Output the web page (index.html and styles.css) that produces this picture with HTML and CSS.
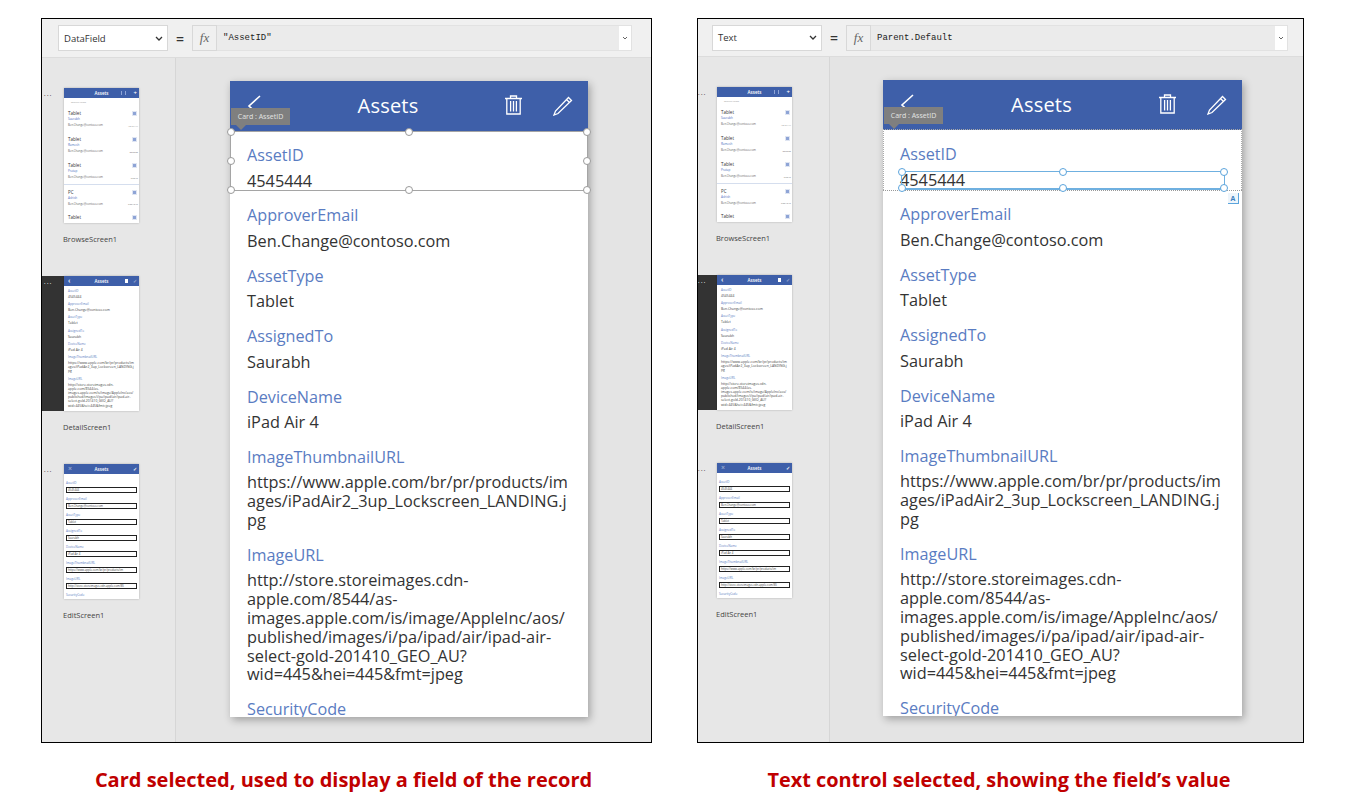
FILE: index.html
```html
<!DOCTYPE html>
<html lang="en">
<head>
    <meta charset="UTF-8">
    <meta name="viewport" content="width=device-width, initial-scale=1.0">
    <title>Card and text control selected</title>
    <link rel="stylesheet" href="styles.css">
</head>
<body>
    <div class="page">

        <!-- Painel esquerdo: card selecionado -->
        <section class="figure figure-left">
            <div class="studio">
                <div class="formula-bar">
                    <div class="prop-select"><span>DataField</span>
                        <svg class="caret" width="8" height="5" viewBox="0 0 8 5"><path d="M1 1l3 3 3-3" fill="none" stroke="#333" stroke-width="1.3"/></svg>
                    </div>
                    <div class="equals">=</div>
                    <div class="fx">fx</div>
                    <div class="formula-input"><span>"AssetID"</span>
                        <div class="expand"><svg width="6" height="4" viewBox="0 0 6 4"><path d="M1 1l2 2 2-2" fill="none" stroke="#666" stroke-width="1"/></svg></div>
                    </div>
                </div>
                <div class="workspace">
                    <aside class="sidebar">
                        <div class="screen-item">
                            <div class="screen-row"><div class="dots">•••</div>
                                <div class="thumb">
                                    <div class="thumb-head"><span>Assets</span><i class="thumb-sort"></i><i class="thumb-plus">+</i></div>
                                    <div class="thumb-search">Search items</div>
                                    <div class="thumb-card"><b>Tablet</b><em>Saurabh</em><span>Ben.Change@contoso.com</span><small>4545444</small><u></u></div>
                                    <div class="thumb-card"><b>Tablet</b><em>Ramesh</em><span>Ben.Change@contoso.com</span><small>323232</small><u></u></div>
                                    <div class="thumb-card"><b>Tablet</b><em>Pratap</em><span>Ben.Change@contoso.com</span><small>52345</small><u></u></div>
                                    <div class="thumb-card thumb-card-line"><b>PC</b><em>Ashish</em><span>Ben.Change@contoso.com</span><small>5234345</small><u></u></div>
                                    <div class="thumb-card"><b>Tablet</b><u></u></div>
                                </div>
                            </div>
                            <div class="screen-name">BrowseScreen1</div>
                        </div>
                        <div class="screen-item">
                            <div class="screen-row screen-row-active"><div class="dots">•••</div>
                                <div class="thumb">
                                    <div class="thumb-head"><i class="thumb-back">‹</i><span>Assets</span><i class="thumb-box"></i><i class="thumb-check thumb-dim">✓</i></div>
                                    <div class="thumb-detail">
                                        <em>AssetID</em><p>4545444</p>
                                        <em>ApproverEmail</em><p>Ben.Change@contoso.com</p>
                                        <em>AssetType</em><p>Tablet</p>
                                        <em>AssignedTo</em><p>Saurabh</p>
                                        <em>DeviceName</em><p>iPad Air 4</p>
                                        <em>ImageThumbnailURL</em><p>https://www.apple.com/br/pr/products/im<br>ages/iPadAir2_3up_Lockscreen_LANDING.j<br>pg</p>
                                        <em>ImageURL</em><p>http://store.storeimages.cdn-<br>apple.com/8544/as-<br>images.apple.com/is/image/AppleInc/aos/<br>published/images/i/pa/ipad/air/ipad-air-<br>select-gold-201410_GEO_AU?<br>wid=445&amp;hei=445&amp;fmt=jpeg</p>
                                    </div>
                                </div>
                            </div>
                            <div class="screen-name">DetailScreen1</div>
                        </div>
                        <div class="screen-item">
                            <div class="screen-row"><div class="dots">•••</div>
                                <div class="thumb">
                                    <div class="thumb-head"><i class="thumb-back thumb-dim">×</i><span>Assets</span><i class="thumb-check">✓</i></div>
                                    <div class="thumb-edit">
                                        <em>AssetID</em><p>4545444</p>
                                        <em>ApproverEmail</em><p>Ben.Change@contoso.com</p>
                                        <em>AssetType</em><p>Tablet</p>
                                        <em>AssignedTo</em><p>Saurabh</p>
                                        <em>DeviceName</em><p>iPad Air 4</p>
                                        <em>ImageThumbnailURL</em><p>https://www.apple.com/br/pr/products/im</p>
                                        <em>ImageURL</em><p>http://store.storeimages.cdn-apple.com/85</p>
                                        <em>SecurityCode</em><p></p>
                                    </div>
                                </div>
                            </div>
                            <div class="screen-name">EditScreen1</div>
                        </div>
                    </aside>
                    <main class="canvas">
                        <div class="phone">
                            <header class="phone-head">
                                <svg class="back-icon" width="16" height="24" viewBox="0 0 16 24"><path d="M14 2L3 12l11 10" fill="none" stroke="#fff" stroke-width="1.6"/></svg>
                                <h2>Assets</h2>
                                <svg class="trash-icon" width="19" height="20" viewBox="0 0 19 20"><path d="M1 3.5h17M6.5 3V1h6v2M2.8 3.5V19h13.4V3.5M6.6 6v10.5M9.5 6v10.5M12.4 6v10.5" fill="none" stroke="#fff" stroke-width="1.3"/></svg>
                                <svg class="pencil-icon" width="20" height="20" viewBox="0 0 20 20"><path d="M15.5 1.5l3 3L5 17.5l-4 1.5 1.5-4zM13.5 3.5l3 3" fill="none" stroke="#fff" stroke-width="1.3"/></svg>
                            </header>
                            <div class="phone-body">
                                <div class="field"><label>AssetID</label><p>4545444</p></div>
                                <div class="field"><label>ApproverEmail</label><p>Ben.Change@contoso.com</p></div>
                                <div class="field"><label>AssetType</label><p>Tablet</p></div>
                                <div class="field"><label>AssignedTo</label><p>Saurabh</p></div>
                                <div class="field"><label>DeviceName</label><p>iPad Air 4</p></div>
                                <div class="field"><label>ImageThumbnailURL</label><p>https://www.apple.com/br/pr/products/im<br>ages/iPadAir2_3up_Lockscreen_LANDING.j<br>pg</p></div>
                                <div class="field"><label>ImageURL</label><p>http://store.storeimages.cdn-<br>apple.com/8544/as-<br>images.apple.com/is/image/AppleInc/aos/<br>published/images/i/pa/ipad/air/ipad-air-<br>select-gold-201410_GEO_AU?<br>wid=445&amp;hei=445&amp;fmt=jpeg</p></div>
                                <div class="field"><label>SecurityCode</label></div>
                            </div>
                            <div class="tooltip">Card : AssetID</div>
                            <div class="card-frame">
                                <i class="handle h-tl"></i><i class="handle h-tc"></i><i class="handle h-tr"></i>
                                <i class="handle h-ml"></i><i class="handle h-mr"></i>
                                <i class="handle h-bl"></i><i class="handle h-bc"></i><i class="handle h-br"></i>
                            </div>
                        </div>
                    </main>
                </div>
            </div>
            <p class="caption">Card selected, used to display a field of the record</p>
        </section>

        <!-- Painel direito: controle de texto selecionado -->
        <section class="figure figure-right">
            <div class="studio">
                <div class="formula-bar">
                    <div class="prop-select"><span>Text</span>
                        <svg class="caret" width="8" height="5" viewBox="0 0 8 5"><path d="M1 1l3 3 3-3" fill="none" stroke="#333" stroke-width="1.3"/></svg>
                    </div>
                    <div class="equals">=</div>
                    <div class="fx">fx</div>
                    <div class="formula-input"><span>Parent.Default</span>
                        <div class="expand"><svg width="6" height="4" viewBox="0 0 6 4"><path d="M1 1l2 2 2-2" fill="none" stroke="#666" stroke-width="1"/></svg></div>
                    </div>
                </div>
                <div class="workspace">
                    <aside class="sidebar">
                        <div class="screen-item">
                            <div class="screen-row"><div class="dots">•••</div>
                                <div class="thumb">
                                    <div class="thumb-head"><span>Assets</span><i class="thumb-sort"></i><i class="thumb-plus">+</i></div>
                                    <div class="thumb-search">Search items</div>
                                    <div class="thumb-card"><b>Tablet</b><em>Saurabh</em><span>Ben.Change@contoso.com</span><small>4545444</small><u></u></div>
                                    <div class="thumb-card"><b>Tablet</b><em>Ramesh</em><span>Ben.Change@contoso.com</span><small>323232</small><u></u></div>
                                    <div class="thumb-card"><b>Tablet</b><em>Pratap</em><span>Ben.Change@contoso.com</span><small>52345</small><u></u></div>
                                    <div class="thumb-card thumb-card-line"><b>PC</b><em>Ashish</em><span>Ben.Change@contoso.com</span><small>5234345</small><u></u></div>
                                    <div class="thumb-card"><b>Tablet</b><u></u></div>
                                </div>
                            </div>
                            <div class="screen-name">BrowseScreen1</div>
                        </div>
                        <div class="screen-item">
                            <div class="screen-row screen-row-active"><div class="dots">•••</div>
                                <div class="thumb">
                                    <div class="thumb-head"><i class="thumb-back">‹</i><span>Assets</span><i class="thumb-box"></i><i class="thumb-check thumb-dim">✓</i></div>
                                    <div class="thumb-detail">
                                        <em>AssetID</em><p>4545444</p>
                                        <em>ApproverEmail</em><p>Ben.Change@contoso.com</p>
                                        <em>AssetType</em><p>Tablet</p>
                                        <em>AssignedTo</em><p>Saurabh</p>
                                        <em>DeviceName</em><p>iPad Air 4</p>
                                        <em>ImageThumbnailURL</em><p>https://www.apple.com/br/pr/products/im<br>ages/iPadAir2_3up_Lockscreen_LANDING.j<br>pg</p>
                                        <em>ImageURL</em><p>http://store.storeimages.cdn-<br>apple.com/8544/as-<br>images.apple.com/is/image/AppleInc/aos/<br>published/images/i/pa/ipad/air/ipad-air-<br>select-gold-201410_GEO_AU?<br>wid=445&amp;hei=445&amp;fmt=jpeg</p>
                                    </div>
                                </div>
                            </div>
                            <div class="screen-name">DetailScreen1</div>
                        </div>
                        <div class="screen-item">
                            <div class="screen-row"><div class="dots">•••</div>
                                <div class="thumb">
                                    <div class="thumb-head"><i class="thumb-back thumb-dim">×</i><span>Assets</span><i class="thumb-check">✓</i></div>
                                    <div class="thumb-edit">
                                        <em>AssetID</em><p>4545444</p>
                                        <em>ApproverEmail</em><p>Ben.Change@contoso.com</p>
                                        <em>AssetType</em><p>Tablet</p>
                                        <em>AssignedTo</em><p>Saurabh</p>
                                        <em>DeviceName</em><p>iPad Air 4</p>
                                        <em>ImageThumbnailURL</em><p>https://www.apple.com/br/pr/products/im</p>
                                        <em>ImageURL</em><p>http://store.storeimages.cdn-apple.com/85</p>
                                        <em>SecurityCode</em><p></p>
                                    </div>
                                </div>
                            </div>
                            <div class="screen-name">EditScreen1</div>
                        </div>
                    </aside>
                    <main class="canvas">
                        <div class="phone phone-text">
                            <header class="phone-head">
                                <svg class="back-icon" width="16" height="24" viewBox="0 0 16 24"><path d="M14 2L3 12l11 10" fill="none" stroke="#fff" stroke-width="1.6"/></svg>
                                <h2>Assets</h2>
                                <svg class="trash-icon" width="19" height="20" viewBox="0 0 19 20"><path d="M1 3.5h17M6.5 3V1h6v2M2.8 3.5V19h13.4V3.5M6.6 6v10.5M9.5 6v10.5M12.4 6v10.5" fill="none" stroke="#fff" stroke-width="1.3"/></svg>
                                <svg class="pencil-icon" width="20" height="20" viewBox="0 0 20 20"><path d="M15.5 1.5l3 3L5 17.5l-4 1.5 1.5-4zM13.5 3.5l3 3" fill="none" stroke="#fff" stroke-width="1.3"/></svg>
                            </header>
                            <div class="phone-body">
                                <div class="field"><label>AssetID</label><p>4545444</p></div>
                                <div class="field"><label>ApproverEmail</label><p>Ben.Change@contoso.com</p></div>
                                <div class="field"><label>AssetType</label><p>Tablet</p></div>
                                <div class="field"><label>AssignedTo</label><p>Saurabh</p></div>
                                <div class="field"><label>DeviceName</label><p>iPad Air 4</p></div>
                                <div class="field"><label>ImageThumbnailURL</label><p>https://www.apple.com/br/pr/products/im<br>ages/iPadAir2_3up_Lockscreen_LANDING.j<br>pg</p></div>
                                <div class="field"><label>ImageURL</label><p>http://store.storeimages.cdn-<br>apple.com/8544/as-<br>images.apple.com/is/image/AppleInc/aos/<br>published/images/i/pa/ipad/air/ipad-air-<br>select-gold-201410_GEO_AU?<br>wid=445&amp;hei=445&amp;fmt=jpeg</p></div>
                                <div class="field"><label>SecurityCode</label></div>
                            </div>
                            <div class="tooltip">Card : AssetID</div>
                            <div class="card-dotted"></div>
                            <div class="text-frame">
                                <i class="handle h-tl"></i><i class="handle h-tc"></i><i class="handle h-tr"></i>
                                <i class="handle h-bl"></i><i class="handle h-bc"></i><i class="handle h-br"></i>
                                <div class="text-badge">A</div>
                            </div>
                        </div>
                    </main>
                </div>
            </div>
            <p class="caption">Text control selected, showing the field’s value</p>
        </section>
    </div>
</body>
</html>
```

FILE: styles.css
```css
body {
    margin: 0;
    background-color: #fff;
    font-family: "Open Sans", sans-serif;
}
.page {
    display: flex;
    gap: 45px;
    padding: 18px 0 0 41px;
}
.figure-left {
    width: 611px;
}
.figure-right {
    width: 607px;
}
.studio {
    height: 723px;
    border: 1px solid #000;
    background-color: #e4e4e4;
    display: flex;
    flex-direction: column;
    overflow: hidden;
}
.caption {
    margin: 23px 0 0;
    padding-right: 6px;
    text-align: center;
    color: #c00000;
    font-size: 20px;
    line-height: 28px;
    font-weight: 700;
}
.figure-right .caption {
    padding-right: 3px;
    font-size: 19.9px;
}

/* barra de formula */
.formula-bar {
    height: 38px;
    flex: none;
    display: flex;
    align-items: center;
    padding-left: 16px;
    background-color: #f0f0f0;
    border-bottom: 1px solid #dcdcdc;
}
.figure-right .formula-bar {
    height: 37px;
    padding-left: 14px;
}
.prop-select {
    width: 110px;
    height: 26px;
    display: flex;
    align-items: center;
    justify-content: space-between;
    padding: 0 4px 0 5px;
    box-sizing: border-box;
    background-color: #fff;
    border: 1px solid #d8d8d8;
    font-size: 9.5px;
    color: #333;
}
.equals {
    width: 24px;
    text-align: center;
    font-size: 14px;
    font-weight: 600;
    color: #333;
}
.fx {
    width: 25px;
    height: 26px;
    box-sizing: border-box;
    border: 1px solid #d8d8d8;
    background-color: #f0f0f0;
    text-align: center;
    font-family: "Liberation Serif", serif;
    font-style: italic;
    font-size: 13px;
    line-height: 23px;
    color: #666;
}
.formula-input {
    height: 26px;
    width: 415px;
    box-sizing: border-box;
    display: flex;
    align-items: center;
    justify-content: space-between;
    padding-left: 6px;
    background-color: #ebebeb;
    border: 1px solid #e2e2e2;
    border-left: none;
    font-family: "Liberation Mono", monospace;
    font-size: 9px;
    color: #222;
}
.figure-right .formula-input {
    width: 417px;
}
.expand {
    width: 12px;
    height: 24px;
    display: flex;
    align-items: center;
    justify-content: center;
    background-color: #fff;
}

.workspace {
    flex: 1;
    display: flex;
    min-height: 0;
}

/* lista de telas */
.sidebar {
    width: 134px;
    flex: none;
    box-sizing: border-box;
    padding-top: 30px;
    background-color: #e7e7e7;
    border-right: 1px solid #d6d6d6;
}
.figure-right .sidebar {
    width: 132px;
}
.screen-item {
    height: 188px;
}
.screen-row {
    display: flex;
    height: 135px;
    padding-left: 2px;
    width: 97px;
    box-sizing: border-box;
}
.figure-right .screen-row {
    width: 94px;
    padding-left: 0;
}
.screen-row-active {
    background-color: #333;
}
.dots {
    width: 20px;
    flex: none;
    font-size: 4px;
    line-height: 16px;
    letter-spacing: 1.4px;
    color: #555;
}
.figure-right .dots {
    width: 19px;
}
.screen-row-active .dots {
    color: #ddd;
}
.screen-name {
    margin: 11px 0 0 21px;
    font-size: 7.5px;
    line-height: 11px;
    color: #444;
}
.figure-right .screen-name {
    margin-left: 18px;
}
.thumb {
    width: 75px;
    height: 135px;
    flex: none;
    background-color: #fff;
    box-shadow: 0 0 2px rgba(0, 0, 0, 0.25);
    overflow: hidden;
    font-size: 3px;
    line-height: 4px;
    color: #666;
}
.thumb-head {
    height: 10px;
    background-color: #3e5fa9;
    color: #fff;
    font-size: 4.5px;
    font-weight: 600;
    line-height: 10px;
    text-align: center;
    position: relative;
}
.thumb-head i {
    position: absolute;
    top: 0;
    font-style: normal;
}
.thumb-plus {
    right: 2px;
    font-size: 6px;
}
.thumb-sort {
    right: 13px;
    top: 3px !important;
    width: 3px;
    height: 4px;
    border-left: 1px solid #8ea4d6;
    border-right: 1px solid #8ea4d6;
}
.thumb-back {
    left: 4px;
    font-size: 7px;
}
.thumb-check {
    right: 2px;
    font-size: 5px;
}
.thumb-dim {
    opacity: 0.45;
}
.thumb-box {
    right: 11px;
    top: 3px !important;
    width: 3px;
    height: 4px;
    background-color: #fff;
}
.thumb-search {
    padding: 2px 0 0 7px;
    height: 6px;
    color: #999;
    font-size: 2.5px;
}
.thumb-card {
    height: 26px;
    box-sizing: border-box;
    padding: 3.5px 0 0 4px;
    position: relative;
}
.thumb-card-line {
    border-top: 1px solid #d5deee;
}
.thumb-card b {
    display: block;
    font-weight: 400;
    font-size: 4.5px;
    line-height: 6px;
    color: #333;
}
.thumb-card em {
    display: block;
    font-style: normal;
    color: #4a6cc0;
    line-height: 6px;
}
.thumb-card span {
    display: block;
    font-size: 2.8px;
    line-height: 7px;
}
.thumb-card small {
    position: absolute;
    right: 1px;
    bottom: 4px;
    font-size: 2.5px;
    color: #777;
}
.thumb-card u {
    position: absolute;
    right: 2px;
    top: 5px;
    width: 5px;
    height: 5px;
    border: 1px solid #dfe5f2;
    box-sizing: border-box;
    background-color: #8ea4d6;
}
.thumb-detail {
    padding: 3px 3px 0 4px;
}
.thumb-detail em,
.thumb-edit em {
    display: block;
    font-style: normal;
    color: #5a7cc2;
    font-size: 3px;
    line-height: 4px;
}
.thumb-detail p {
    margin: 2px 0 3px;
    font-size: 3.35px;
    line-height: 4.2px;
    color: #444;
    white-space: nowrap;
}
.thumb-edit {
    padding: 6px 2px 0;
}
.thumb-edit em {
    height: 6px;
    line-height: 6px;
}
.thumb-edit p {
    margin: 1px 0 3px;
    height: 6px;
    box-sizing: border-box;
    padding-left: 1px;
    border: 1px solid #222;
    font-size: 2.8px;
    line-height: 4px;
    color: #444;
    white-space: nowrap;
    overflow: hidden;
}

/* tela do app */
.canvas {
    flex: 1;
    padding: 23px 0 0 54px;
}
.figure-right .canvas {
    padding-left: 53px;
}
.phone {
    width: 358px;
    height: 636px;
    position: relative;
    background-color: #fff;
    box-shadow: 2px 3px 8px rgba(0, 0, 0, 0.3);
}
.phone-text {
    width: 359px;
}
.phone-head {
    height: 50px;
    box-sizing: border-box;
    padding-right: 42px;
    background-color: #3e5fa9;
    position: relative;
    display: flex;
    align-items: center;
    justify-content: center;
}
.phone-head h2 {
    margin: 0;
    color: #fff;
    font-size: 20px;
    font-weight: 400;
    line-height: 50px;
    letter-spacing: 0.2px;
}
.back-icon {
    position: absolute;
    left: 16px;
    top: 13px;
}
.trash-icon {
    position: absolute;
    right: 65px;
    top: 14px;
}
.pencil-icon {
    position: absolute;
    right: 15px;
    top: 15px;
}
.phone-body {
    height: 586px;
    overflow: hidden;
}
.field {
    padding: 13px 0 1.1px 17px;
    color: #333;
}
.field label {
    display: block;
    color: #5a7cc2;
    font-size: 16.2px;
    line-height: 22px;
}
.field p {
    margin: 5.5px 0 0;
    font-size: 16.3px;
    line-height: 18.8px;
    white-space: nowrap;
}
.tooltip {
    position: absolute;
    left: 1px;
    top: 27px;
    width: 59px;
    height: 17px;
    background-color: #7f7f7f;
    color: #e4e4e4;
    font-size: 7px;
    line-height: 17px;
    text-align: center;
}
.tooltip::after {
    content: "";
    position: absolute;
    left: 5px;
    top: 17px;
    border-left: 5px solid transparent;
    border-right: 5px solid transparent;
    border-top: 5px solid #7f7f7f;
}

/* selecao */
.card-frame {
    position: absolute;
    left: 0;
    right: 0;
    top: 50px;
    height: 60px;
    border: 1px solid #a5a5a5;
    box-sizing: border-box;
}
.card-dotted {
    position: absolute;
    left: 0;
    right: 0;
    top: 49px;
    height: 61px;
    box-sizing: border-box;
    border: 1px dotted #aaa;
    border-bottom: none;
}
.phone-text::after {
    content: "";
    position: absolute;
    left: 0;
    right: 0;
    top: 110px;
    border-top: 1px dotted #999;
}
.text-frame {
    position: absolute;
    left: 18px;
    top: 91px;
    width: 324px;
    height: 19px;
    box-sizing: border-box;
    border: 1px solid #6fb0e0;
    border-bottom-width: 2px;
    z-index: 1;
    --handle-border: #5ba4dc;
}
.handle {
    position: absolute;
    width: 8px;
    height: 8px;
    box-sizing: border-box;
    border-radius: 50%;
    background-color: #fff;
    border: 1px solid var(--handle-border, #9a9a9a);
    margin: -4px 0 0 -4px;
}
.h-tl { left: 0; top: 0; }
.h-tc { left: 50%; top: 0; }
.h-tr { left: 100%; top: 0; }
.h-ml { left: 0; top: 50%; }
.h-mr { left: 100%; top: 50%; }
.h-bl { left: 0; top: 100%; }
.h-bc { left: 50%; top: 100%; }
.h-br { left: 100%; top: 100%; }
.text-badge {
    position: absolute;
    right: -15px;
    top: 21px;
    width: 11px;
    height: 11px;
    box-sizing: border-box;
    border-right: 1px solid #5ba4dc;
    border-bottom: 1px solid #5ba4dc;
    background-color: #eef5fb;
    color: #3a7fc0;
    font-size: 7px;
    font-weight: 700;
    line-height: 11px;
    text-align: center;
}
```
